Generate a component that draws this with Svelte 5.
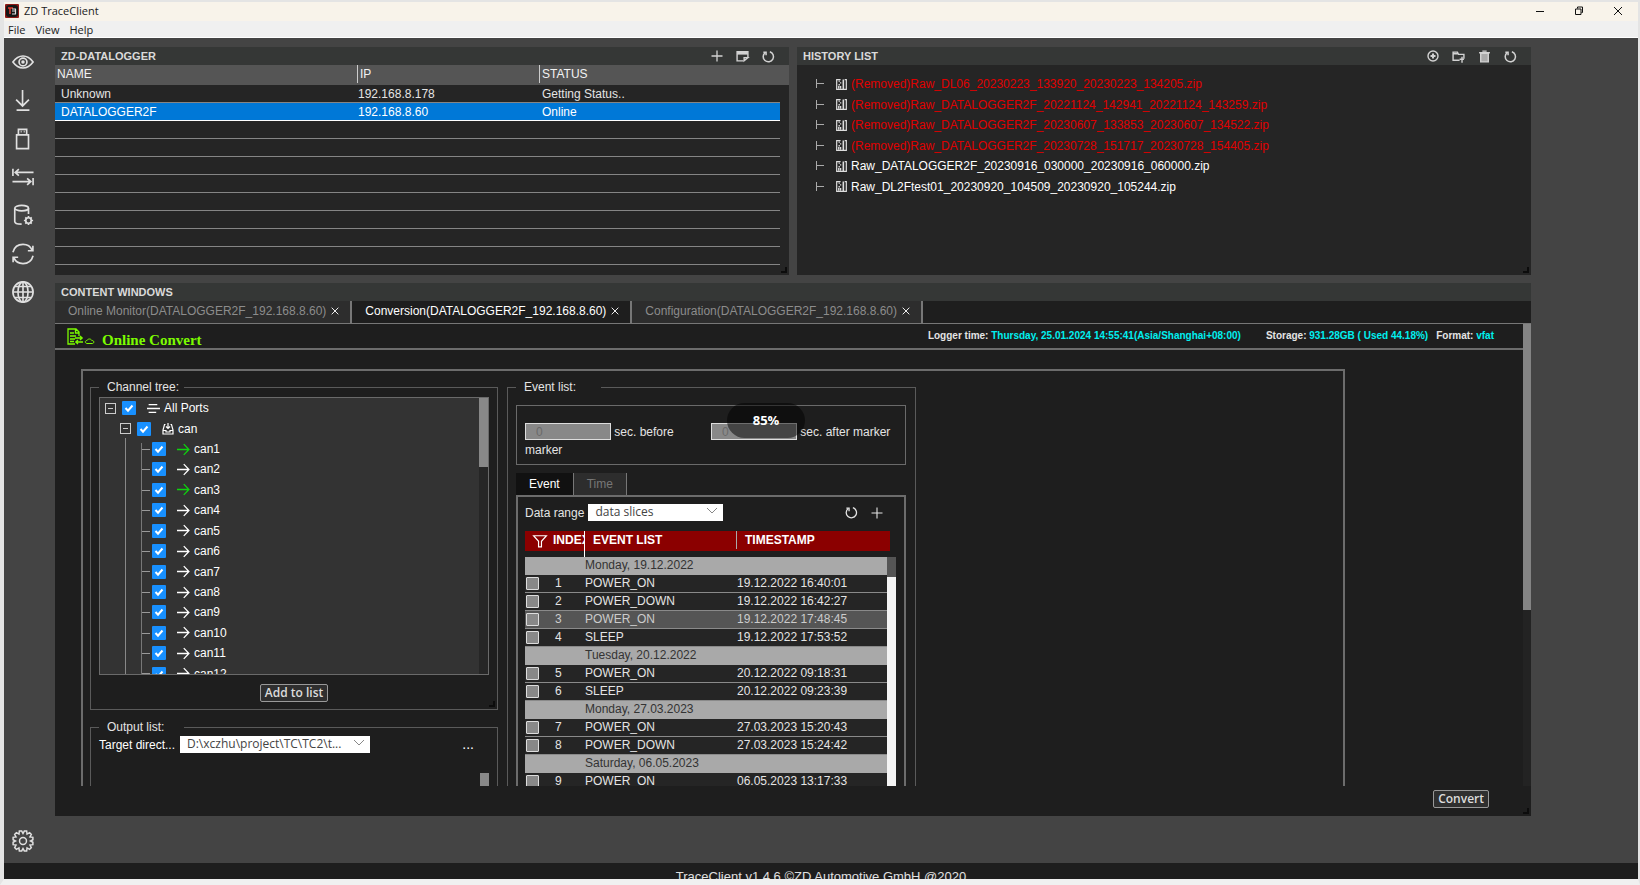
<script>
  const icons = {
    eye: '<path d="M1 12C5 6.500 8.500 5.500 12 5.500S19 6.500 23 12C19 17.500 15.500 18.500 12 18.500S5 17.500 1 12Z"/><circle cx="12" cy="12" r="4.300"/><circle cx="12" cy="12" r="1"/>',
    download: '<path d="M11.500 1v17M4.500 11.500l7 7 7-7M5 23h14"/>',
    usb: '<path d="M7 7.500V1.500h9v6M5 7.500h13v15H5zM9.500 4h1M12.800 4h1"/>',
    transfer: '<path d="M1 3v8M3 7h20.500M7.500 3.500L3.500 7l4 3.500M.5 17h20.500M16.500 13.500l4 3.500-4 3.500M23 13v8"/>',
    database: '<ellipse cx="10.500" cy="4.500" rx="7.500" ry="3"/><path d="M3 4.500V19c0 1.800 3 3 7.500 3M18 4.500V11"/><circle cx="18" cy="18" r="3"/><path d="M18 13v2M18 21v2M13 18h2M21 18h2M14.500 14.500l1.400 1.400M20.100 20.100l1.400 1.400M14.500 21.500l1.400-1.400M20.100 15.900l1.400-1.400"/>',
    sync: '<path d="M1 10C2.500 4.500 7 1.500 12 1.500c4.500 0 8.300 2.300 10 6.500M22.800 3v5.500h-5.500M23 14c-1.500 5.500-6 8.500-11 8.500-4.500 0-8.300-2.300-10-6.500M1.200 21v-5.500h5.500"/>',
    globe: '<circle cx="12" cy="12" r="11"/><ellipse cx="12" cy="12" rx="5.500" ry="11"/><path d="M12 1v22M1 12h22M3 6h18M3 18h18"/>',
    gear: '<circle cx="12" cy="12" r="3.800"/><path d="M9.600 1.200h1l1.400 2.600 1.400-2.600h2.600l.4 3.200 2.800-1.500 1.900 1.900-1.500 2.800 3.200.4v2.600L20.200 12l2.600 1.400V16l-3.200.4 1.500 2.800-1.900 1.900-2.800-1.500-.4 3.200h-2.600L12 20.200l-1.400 2.600H8l-.4-3.200-2.800 1.500-1.900-1.900 1.500-2.800-3.200-.4v-2.600L3.800 12l-2.600-1.400V8l3.200-.4-1.500-2.800 1.900-1.900 2.800 1.500.4-3.200z"/>',
    plus: '<path d="M12 1v22M1 12h22"/>',
    window: '<path d="M14 20H2V3h20v10"/><path d="M2 6h20" stroke-width="5"/><path d="M15 20v-6h7z"/>',
    reload: '<path d="M14.500 3.200A9.500 9.500 0 1 1 6 4.700"/><path d="M2.500 4h5v5.500"/>',
    add: '<circle cx="12" cy="12" r="10"/><path d="M12 7v10M7 12h10" stroke-width="4"/>',
    folder: '<path d="M14 19H2V4h8l2 4h10v8M2 7h9"/><path d="M14 17h8M18.500 12.500v11"/>',
    trash: '<path d="M2 5h20M8 2h8"/><path d="M5 6h14v16H5z" fill="#aaa"/>',
    close: '<path d="M2 2l20 20M22 2L2 22"/>',
    filter: '<path d="M1 3h22l-8.500 9.500V22h-5v-9.500z"/>',
    arrow: '<path d="M0 12h22M12.500 2L22 12l-9.500 10"/>',
    list: '<path d="M3 5h16M0 12h24M3 19h14"/>',
    inbox: '<path d="M7 3H5L2 14v8h20v-8l-3-11h-2M2 15h6v3h8v-3h6M12 0v11M8 7l4 4 4-4"/>',
    zip: '<path d="M10 1.500H1.500v21h21v-21H19"/><path d="M7 3v3M10 7v3M7 11v3M10 15v6M6 15v6" stroke-width="3"/><path d="M16 1v7M16 8v14" stroke-width="3.500"/>'
  };

  const rail = [
    ['eye', 'Monitor'], ['download', 'Download'], ['usb', 'USB drive'], ['transfer', 'Transfer'],
    ['database', 'Database'], ['sync', 'Sync'], ['globe', 'Network']
  ];

  const loggers = [
    { name: 'Unknown', ip: '192.168.8.178', status: 'Getting Status..' },
    { name: 'DATALOGGER2F', ip: '192.168.8.60', status: 'Online', selected: true },
    ...Array.from({ length: 8 }, () => ({ name: '', ip: '', status: '' }))
  ];

  const history = [
    { name: '(Removed)Raw_DL06_20230223_133920_20230223_134205.zip', removed: true },
    { name: '(Removed)Raw_DATALOGGER2F_20221124_142941_20221124_143259.zip', removed: true },
    { name: '(Removed)Raw_DATALOGGER2F_20230607_133853_20230607_134522.zip', removed: true },
    { name: '(Removed)Raw_DATALOGGER2F_20230728_151717_20230728_154405.zip', removed: true },
    { name: 'Raw_DATALOGGER2F_20230916_030000_20230916_060000.zip' },
    { name: 'Raw_DL2Ftest01_20230920_104509_20230920_105244.zip' }
  ];

  const tabs = ['Online Monitor', 'Conversion', 'Configuration'];
  let activeTab = $state('Conversion');

  const channels = Array.from({ length: 12 }, (_, i) => ({ name: `can${i + 1}`, live: i === 0 || i === 2 }));

  const events = [
    { day: 'Monday, 19.12.2022' },
    { id: 1, type: 'POWER_ON', time: '19.12.2022 16:40:01' },
    { id: 2, type: 'POWER_DOWN', time: '19.12.2022 16:42:27' },
    { id: 3, type: 'POWER_ON', time: '19.12.2022 17:48:45', hover: true },
    { id: 4, type: 'SLEEP', time: '19.12.2022 17:53:52' },
    { day: 'Tuesday, 20.12.2022' },
    { id: 5, type: 'POWER_ON', time: '20.12.2022 09:18:31' },
    { id: 6, type: 'SLEEP', time: '20.12.2022 09:23:39' },
    { day: 'Monday, 27.03.2023' },
    { id: 7, type: 'POWER_ON', time: '27.03.2023 15:20:43' },
    { id: 8, type: 'POWER_DOWN', time: '27.03.2023 15:24:42' },
    { day: 'Saturday, 06.05.2023' },
    { id: 9, type: 'POWER_ON', time: '06.05.2023 13:17:33' }
  ];
</script>

{#snippet icon(name, size, width)}
  <svg class="icon" viewBox="0 0 24 24" width={size} height={size} stroke-width={width} aria-hidden="true">{@html icons[name]}</svg>
{/snippet}

{#snippet grip()}
  <svg class="grip" viewBox="0 0 6 6" width="6" height="6" aria-hidden="true"><path d="M0 5h5V0" /></svg>
{/snippet}

{#snippet chevron()}
  <svg class="chevron" viewBox="0 0 12 8" width="12" height="8" aria-hidden="true"><path d="M1 1l5 5 5-5" /></svg>
{/snippet}

<div class="window">
  <header class="titlebar">
    <svg viewBox="0 0 14 14" width="14" height="14" aria-hidden="true">
      <rect width="14" height="14" rx="1" fill="#8d1a17" />
      <rect x="1" y="1" width="12" height="12" rx="3" fill="#161616" />
      <path d="M3 4h5M5 4v6" stroke="#e23b30" stroke-width="1.500" />
      <path d="M7 5h4M7 7h4M7 10h4M10.500 5v5" stroke="#ddd" stroke-width="1.200" />
    </svg>
    <span class="app-name">ZD TraceClient</span>
    <button aria-label="Minimize"><svg viewBox="0 0 10 10" width="10" height="10"><path d="M1 5.500h8" /></svg></button>
    <button aria-label="Restore"><svg viewBox="0 0 10 10" width="10" height="10"><path d="M1.500 3h5.500v5.500H1.500zM3.500 2.500V1h5v5.500H7.500" /></svg></button>
    <button aria-label="Close"><svg viewBox="0 0 10 10" width="10" height="10"><path d="M1 1l8 8M9 1L1 9" /></svg></button>
  </header>
  <nav class="menubar">
    <button>File</button>
    <button>View</button>
    <button>Help</button>
  </nav>

  <div class="body">
    <nav class="rail">
      <div class="rail-group">
        {#each rail as [name, label]}
          <button aria-label={label}>{@render icon(name, 22, 1.8)}</button>
        {/each}
      </div>
      <button class="settings" aria-label="Settings">{@render icon('gear', 22, 1.6)}</button>
    </nav>

    <main>
      <div class="top">
        <section class="panel">
          <div class="panel-head">
            <h2>ZD-DATALOGGER</h2>
            <button aria-label="Add logger">{@render icon('plus', 12, 2.6)}</button>
            <button aria-label="Edit logger">{@render icon('window', 13, 2.6)}</button>
            <button aria-label="Reload loggers">{@render icon('reload', 13, 2.8)}</button>
          </div>
          <div class="loggers-wrap">
            <table class="loggers">
              <colgroup><col class="c-name" /><col class="c-ip" /><col /></colgroup>
              <thead><tr><th>NAME</th><th>IP</th><th>STATUS</th></tr></thead>
              <tbody>
                {#each loggers as row}
                  <tr class:selected={row.selected}><td>{row.name}</td><td>{row.ip}</td><td>{row.status}</td></tr>
                {/each}
              </tbody>
            </table>
          </div>
          {@render grip()}
        </section>

        <section class="panel">
          <div class="panel-head">
            <h2>HISTORY LIST</h2>
            <button aria-label="Add record">{@render icon('add', 12, 2.8)}</button>
            <button aria-label="Open folder">{@render icon('folder', 13, 2.6)}</button>
            <button aria-label="Delete">{@render icon('trash', 13, 2.6)}</button>
            <button aria-label="Reload history">{@render icon('reload', 13, 2.8)}</button>
          </div>
          <ul class="history">
            {#each history as file}
              <li class:removed={file.removed}>
                <svg class="branch" viewBox="0 0 10 10" width="10" height="10" aria-hidden="true"><path d="M1.500 0v9M1.500 4.500H9" /></svg>
                {@render icon('zip', 11, 2.6)}
                <span>{file.name}</span>
              </li>
            {/each}
          </ul>
          {@render grip()}
        </section>
      </div>

      <section class="panel content">
        <div class="panel-head"><h2>CONTENT WINDOWS</h2></div>
        <div class="tabs">
          {#each tabs as tab}
            <div class="tab" class:active={tab === activeTab}>
              <button onclick={() => (activeTab = tab)}>{tab}(DATALOGGER2F_192.168.8.60)</button>
              <button class="tab-close" aria-label="Close {tab}">{@render icon('close', 8, 3)}</button>
            </div>
          {/each}
        </div>

        <div class="view">
          <div class="page">
            <div class="page-head">
              <svg class="convert-icon" viewBox="0 0 28 17" width="28" height="17" aria-hidden="true">
                <path d="M8 16H1V1h8l3 3v4M8.500 1v4H12M3 5h4M3 8h6M3 11h5M3 13.500h4" />
                <path d="M8 10h7M13 8l2.200 2-2.200 2M16 14H9M11 12l-2.200 2 2.200 2" />
                <path d="M20 15.500c-2.500-.5-2-3 0-3 .8-2 4-2 4.800 0 2.400-.2 2.700 2.700.7 3z" stroke-width="1" />
              </svg>
              <h1>Online Convert</h1>
              <p class="status">
                <span class="wide">Logger time: <b>Thursday, 25.01.2024 14:55:41(Asia/Shanghai+08:00)</b></span>
                <span>Storage: <b>931.28GB ( Used 44.18%)</b></span>
                <span>Format: <b>vfat</b></span>
              </p>
            </div>

            <div class="scroll">
              <div class="form">
                <div class="left">
                  <fieldset class="channel-set">
                    <legend>Channel tree:</legend>
                    <div class="tree">
                      <ul>
                        <li>
                          <button class="toggle" aria-label="Collapse All Ports"></button>
                          <label><input type="checkbox" checked />{@render icon('list', 13, 2.4)}All Ports</label>
                        </li>
                        <li class="l2">
                          <button class="toggle" aria-label="Collapse can"></button>
                          <label><input type="checkbox" checked />{@render icon('inbox', 12, 2.4)}can</label>
                        </li>
                        {#each channels as ch}
                          <li class="l3" class:live={ch.live}>
                            <label><input type="checkbox" checked />{@render icon('arrow', 13, 2.4)}<span>{ch.name}</span></label>
                          </li>
                        {/each}
                      </ul>
                      <div class="bar"><div class="thumb"></div></div>
                    </div>
                    <div class="add-row"><button class="action">Add to list</button></div>
                    {@render grip()}
                  </fieldset>

                  <fieldset class="output-set">
                    <legend>Output list:</legend>
                    <div class="field">
                      <label for="target">Target direct...</label>
                      <span class="select target">
                        <select id="target"><option>D:\xczhu\project\TC\TC2\t...</option></select>
                        {@render chevron()}
                      </span>
                      <button class="browse" aria-label="Browse">...</button>
                    </div>
                    <div class="output-bar"></div>
                  </fieldset>
                </div>

                <fieldset class="event-set">
                  <legend>Event list:</legend>
                  <div class="marker">
                    <label><input type="text" placeholder="0" disabled /> sec. before marker</label>
                    <label><input type="text" placeholder="0" disabled /> sec. after marker</label>
                    <div class="zoom-badge">85%</div>
                  </div>
                  <div class="sub-tabs">
                    <button class="on">Event</button>
                    <button>Time</button>
                  </div>
                  <div class="event-box">
                    <div class="range">
                      <label for="range">Data range</label>
                      <span class="select slices">
                        <select id="range"><option>data slices</option></select>
                        {@render chevron()}
                      </span>
                      <button class="push" aria-label="Reload events">{@render icon('reload', 13, 2.4)}</button>
                      <button aria-label="Add slice">{@render icon('plus', 12, 2.2)}</button>
                    </div>
                    <div class="events-wrap">
                      <table class="events">
                        <colgroup><col class="c-check" /><col class="c-index" /><col class="c-event" /><col /></colgroup>
                        <thead>
                          <tr>
                            <th colspan="2"><div class="index-head">{@render icon('filter', 14, 2)}<span>INDEX</span></div></th>
                            <th><div class="event-head">EVENT LIST</div></th>
                            <th><div>TIMESTAMP</div></th>
                          </tr>
                        </thead>
                        <tbody>
                          <tr class="spacer"><td colspan="2"></td><td></td><td></td></tr>
                          {#each events as ev}
                            {#if ev.day}
                              <tr class="day"><td></td><td></td><td colspan="2">{ev.day}</td></tr>
                            {:else}
                              <tr class:hover={ev.hover}>
                                <td><input type="checkbox" aria-label="Select event {ev.id}" /></td>
                                <td>{ev.id}</td>
                                <td>{ev.type}</td>
                                <td>{ev.time}</td>
                              </tr>
                            {/if}
                          {/each}
                        </tbody>
                      </table>
                      <div class="events-bar"></div>
                    </div>
                  </div>
                </fieldset>
              </div>
            </div>
          </div>
          <div class="page-bar"><div class="thumb"></div></div>
        </div>
        <div class="actions"><button class="action">Convert</button></div>
        {@render grip()}
      </section>
    </main>
  </div>

  <footer>TraceClient v1.4.6 ©ZD Automotive GmbH @2020</footer>
</div>

<style>
  :global(body) { margin: 0; background: #f0f0f0; }

  .window {
    --ui: "Open Sans", "Noto Sans", sans-serif;
    box-sizing: border-box;
    height: 100vh;
    min-height: 640px;
    display: flex;
    flex-direction: column;
    border: solid #e4e4e4;
    border-width: 2px 2px 6px 4px;
    border-bottom-color: #f0f0f0;
    font: 12px/18px "Liberation Sans", Arial, sans-serif;
    color: #e4e4e4;
  }
  .window :global(*) { box-sizing: border-box; }
  button, input, select { font: inherit; color: inherit; margin: 0; padding: 0; border: 0; background: none; }
  h1, h2, p, ul { margin: 0; padding: 0; list-style: none; }
  .icon { display: block; flex: none; fill: none; stroke: currentColor; overflow: visible; }

  .titlebar { flex: none; height: 19px; display: flex; align-items: center; background: #f8f3ea; padding: 0 1px 2px; font: 11px/16px var(--ui); color: #222; }
  .app-name { flex: 1; padding-left: 5px; }
  .titlebar button { width: 39px; display: flex; justify-content: center; }
  .titlebar button svg { fill: none; stroke: #111; stroke-width: 1; }
  .menubar { flex: none; height: 17px; display: flex; gap: 10px; padding-left: 4px; background: #f0f0f0; border-bottom: 1px solid #fff; font: 11px/17px var(--ui); color: #222; }

  .body { flex: 1; min-height: 0; display: flex; background: #444; }
  .rail { width: 51px; display: flex; flex-direction: column; padding: 5px 0 3px 7px; color: #e0e0e0; }
  .rail-group { display: flex; flex-direction: column; height: 268px; }
  .rail button { flex: 1; width: 23px; display: flex; align-items: center; justify-content: center; }
  .rail .settings { flex: none; height: 38px; margin-top: auto; }

  main { flex: 1; min-width: 0; display: flex; flex-direction: column; gap: 8px; padding: 9px 107px 47px 0; }
  .top { display: grid; grid-template-columns: 1fr 1fr; gap: 8px; height: 228px; }
  .panel { position: relative; min-width: 0; display: flex; flex-direction: column; background: #252525; overflow: hidden; }
  .panel-head { flex: none; height: 18px; display: flex; align-items: center; gap: 13px; padding: 0 14px 0 6px; background: #353736; color: #d2d2d2; }
  .panel-head h2 { flex: 1; padding-bottom: 1px; font-size: 11px; line-height: 16px; font-weight: bold; color: #dadada; }
  .panel-head button { width: 13px; display: flex; justify-content: center; }
  .grip { position: absolute; right: 2px; bottom: 2px; fill: none; stroke: #0c0c0c; stroke-width: 2; }

  .loggers-wrap { flex: 1; min-height: 0; overflow: hidden; padding-right: 9px; background: linear-gradient(#555 20px, transparent 20px); }
  .loggers { width: 100%; table-layout: fixed; border-collapse: separate; border-spacing: 0; }
  .c-name { width: 303px; }
  .c-ip { width: 182px; }
  .loggers th { height: 20px; padding: 0 0 2px 2px; text-align: left; font-weight: normal; line-height: 17px; color: #f2f2f2; background: linear-gradient(#ccc, #ccc) right top / 1px 18px no-repeat; }
  .loggers th:last-child { background: none; border-right: 0; }
  .loggers td { height: 18px; padding: 2px 0 0; line-height: 15px; border-bottom: 1px solid #858585; }
  .loggers td:first-child { padding-left: 6px; }
  .loggers td:last-child { padding-left: 2px; }
  .selected td { background: #0078d7; color: #fff; border-bottom-color: #fff; }

  .history { display: flex; flex-direction: column; height: 132px; padding: 9px 0 0 18px; color: #fff; }
  .history li { flex: 1; display: flex; align-items: center; }
  .history .icon { margin: 0 4px 0 11px; color: #ddd; }
  .branch { fill: none; stroke: #aaa; stroke-width: 1; }
  .removed span { color: #e00000; }

  .content { flex: 1; min-height: 0; background: #1e1e1e; }
  .tabs { flex: none; display: flex; height: 23px; border-bottom: 1px solid #777; }
  .tab { display: flex; align-items: center; gap: 5px; height: 22px; padding: 0 11px 2px 13px; background: #2d2d2d; border-right: 2px solid #777; color: #8c8c8c; }
  .tab.active { background: #1e1e1e; color: #fff; }
  .tab-close { color: #eee; }
  .view { flex: 1; min-height: 0; display: flex; }
  .page { flex: 1; min-width: 0; display: flex; flex-direction: column; }
  .page-bar { width: 8px; background: #232323; }
  .page-bar .thumb { height: 62%; background: #848484; }
  .page-head { flex: none; height: 26px; display: flex; align-items: flex-start; padding: 4px 29px 0 12px; border-bottom: 2px solid #6c6c6c; }
  .convert-icon { fill: none; stroke: #7cfc00; stroke-width: 1.300; }
  h1 { flex: 1; padding: 3px 0 0 7px; font: bold 15px/18px "Liberation Serif", "Times New Roman", serif; color: #7cfc00; }
  .status { display: flex; gap: 8px; font-size: 10px; line-height: 15px; font-weight: bold; white-space: nowrap; }
  .status b { color: #00f0f0; }
  .wide { padding-right: 17px; }

  .scroll { flex: 1 1 0; min-height: 0; overflow: hidden; }
  .form { display: grid; grid-template-columns: 408px 409px; gap: 9px; margin: 19px 178px 0 26px; padding: 7px 7px 20px; border: 2px solid #6c6c6c; }
  fieldset { position: relative; min-width: 0; margin: 0; border: 1px solid #5a5a5a; padding: 0 8px; }
  legend { width: 85px; padding: 0 0 0 8px; line-height: 18px; }
  .left { display: flex; flex-direction: column; gap: 8px; }
  .channel-set { padding: 1px 8px 7px; }
  .add-row { display: flex; justify-content: center; }
  .output-set { flex: 1; }
  .event-set { padding: 9px 9px 0 8px; }

  .tree { display: flex; height: 278px; margin-bottom: 9px; overflow: hidden; border: 1px solid #6a6a6a; background: #333; color: #fff; }
  .tree ul { flex: 1; height: 286px; display: flex; flex-direction: column; padding-left: 5px; background: linear-gradient(#888, #888) 25px 40px / 1px 260px no-repeat, linear-gradient(#777, #777) 41px 45px / 1px 260px no-repeat; }
  .tree li { flex: 1; display: flex; align-items: center; }
  .tree label { display: flex; align-items: center; }
  .tree .l2 { padding-left: 15px; }
  .tree .l3 { padding-left: 47px; background: linear-gradient(#999, #999) 37px 10px / 8px 1px no-repeat; }
  .tree .icon { margin: 0 4px 0 11px; }
  .live .icon { color: #0fd20f; }
  .toggle { width: 11px; height: 11px; margin-right: 6px; border: 1px solid #ccc; background: linear-gradient(#ccc, #ccc) center / 5px 1px no-repeat; }
  .tree input { appearance: none; width: 14px; height: 14px; border-radius: 1px; background: #1890ff url("data:image/svg+xml,%3Csvg xmlns='http://www.w3.org/2000/svg' viewBox='0 0 14 14'%3E%3Cpath d='M3.500 7l2.500 2.700L10.500 4.500' fill='none' stroke='white' stroke-width='2'/%3E%3C/svg%3E") center / 14px; }
  .bar { width: 9px; background: #262626; }
  .bar .thumb { height: 69px; background: #888; }

  .action { display: block; height: 18px; padding: 0 4px 1px; border: 1px solid #999; border-radius: 2px; background: #2f2f2f; font: 600 12px/14px var(--ui); color: #dcdcdc; }

  .field { display: flex; align-items: flex-start; }
  .field label { flex: none; width: 81px; color: #fff; }
  .select { position: relative; display: block; height: 17px; }
  .select select { display: block; appearance: none; width: 100%; height: 17px; padding: 0 20px 1px 7px; background: #fff; font: 12px/14px var(--ui); color: #444; }
  .chevron { position: absolute; right: 5px; top: 3px; fill: none; stroke: #888; stroke-width: 1; pointer-events: none; }
  .target { width: 190px; }
  .browse { margin-left: auto; padding-right: 15px; line-height: 16px; font-size: 14px; color: #fff; }
  .output-bar { width: 9px; height: 40px; margin: 19px 0 0 auto; background: #888; }

  .marker { position: relative; display: grid; grid-template-columns: 170px 1fr; gap: 16px; height: 60px; padding: 17px 8px 0; border: 1px solid #6a6a6a; }
  .marker input { width: 86px; height: 17px; padding: 0 10px; border: 1px solid #ddd; background: #888; vertical-align: top; }
  .marker input::placeholder { color: #6a6a6a; }
  .zoom-badge { position: absolute; left: 210px; top: -3px; width: 78px; height: 35px; border-radius: 18px; background: rgba(0, 0, 0, .5); text-align: center; font: bold 13px/34px var(--ui); color: #fff; }
  .sub-tabs { display: flex; margin-top: 8px; height: 22px; }
  .sub-tabs button { padding: 0 13px 1px; background: #2d2d2d; border-right: 1px solid #777; color: #777; }
  .sub-tabs .on { background: #111; color: #fff; }
  .event-box { padding: 7px 7px 0; border: 2px solid #6c6c6c; }
  .range { display: flex; align-items: center; gap: 4px; margin-bottom: 10px; height: 17px; }
  .slices { width: 135px; }
  .range button { width: 13px; display: flex; justify-content: center; }
  .range .push { margin-left: auto; }
  .range button:last-child { margin: 0 14px 0 8px; }

  .events-wrap { display: flex; }
  .events { width: 362px; table-layout: fixed; border-collapse: separate; border-spacing: 0; }
  .c-check { width: 26px; }
  .c-index { width: 34px; }
  .c-event { width: 152px; }
  .events th { height: 20px; padding: 0; text-align: left; background: #8b0000; color: #fff; vertical-align: top; }
  .events th:last-child { box-shadow: 3px 0 #8b0000; }
  .events th div { height: 18px; padding-left: 8px; overflow: hidden; }
  .events th .index-head { height: 20px; display: flex; gap: 6px; border-right: 1px solid #fff; }
  .index-head .icon { margin-top: 3px; }
  .event-head { border-right: 1px solid #aaa; }
  .events td { height: 18px; padding: 0; line-height: 17px; background: #252525; border-bottom: 1px solid #8a8a8a; }
  .events td:nth-child(2) { padding-left: 4px; }
  .events .spacer td { height: 6px; line-height: 0; border: 0; background: none; padding: 0; }
  .events .spacer td:first-child { border-right: 1px solid #fff; }
  .events .day td { background: #a9a9a9; color: #333; border-color: #a9a9a9; }
  .events .hover td { background: #555; color: #ccc; }
  .events input { display: block; appearance: none; width: 13px; height: 13px; margin-left: 1px; border: 1px solid #ddd; border-radius: 1px; background: #888; }
  .events-bar { width: 9px; margin-top: 26px; background: linear-gradient(#555 20px, #f4f4f4 20px); }

  .actions { flex: none; height: 30px; display: flex; justify-content: flex-end; align-items: flex-start; padding: 4px 42px 0 0; }

  footer { flex: none; height: 16px; overflow: hidden; background: #1e1e1e; text-align: center; font-size: 13px; line-height: 27px; color: #e0e0e0; }
</style>
